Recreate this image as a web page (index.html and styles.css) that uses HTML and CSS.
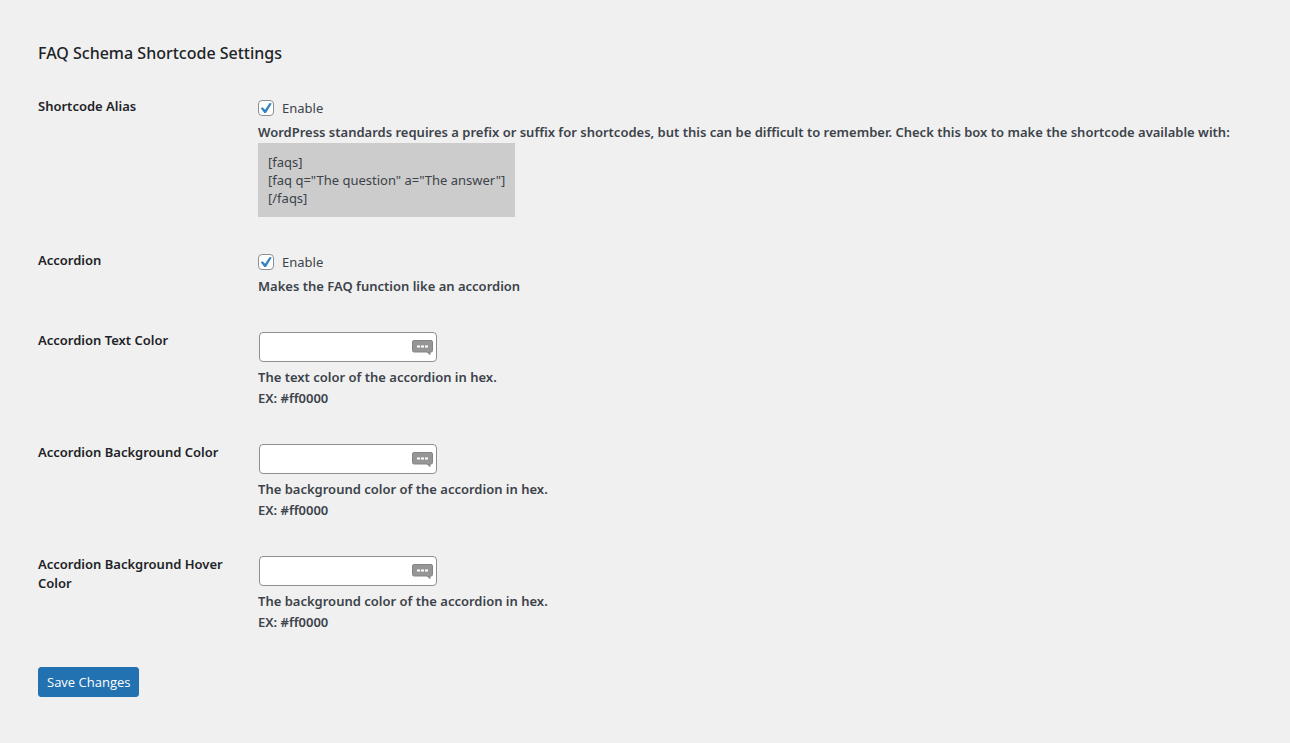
FILE: index.html
```html
<!DOCTYPE html>
<html lang="en">
<head>
    <meta charset="UTF-8">
    <meta name="viewport" content="width=device-width, initial-scale=1.0">
    <title>FAQ Schema Shortcode Settings</title>
    <link rel="stylesheet" href="styles.css">
</head>
<body>
    <form class="settings" method="post">
        <h2>FAQ Schema Shortcode Settings</h2>

        <div class="row">
            <div class="row-title">Shortcode Alias</div>
            <div class="row-field">
                <label class="check"><input type="checkbox" name="alias" checked> Enable</label>
                <p class="description">WordPress standards requires a prefix or suffix for shortcodes, but this can be difficult to remember. Check this box to make the shortcode available with:</p>
                <div class="shortcode">[faqs]<br>[faq q="The question" a="The answer"]<br>[/faqs]</div>
            </div>
        </div>

        <div class="row">
            <div class="row-title">Accordion</div>
            <div class="row-field">
                <label class="check"><input type="checkbox" name="accordion" checked> Enable</label>
                <p class="description">Makes the FAQ function like an accordion</p>
            </div>
        </div>

        <div class="row">
            <label class="row-title" for="text-color">Accordion Text Color</label>
            <div class="row-field">
                <div class="color-field">
                    <input type="text" id="text-color" name="text_color">
                    <svg class="bubble" viewBox="0 0 21 15" aria-hidden="true">
                        <path d="M2 .5h17a1.500 1.500 0 0 1 1.500 1.500v8.500a1.500 1.500 0 0 1-1.500 1.500h-1v2.500l-3-2.500H2a1.500 1.500 0 0 1-1.500-1.500V2A1.500 1.500 0 0 1 2 .5z"/>
                        <path class="dots" d="M5 6.500h11"/>
                    </svg>
                </div>
                <p class="description">The text color of the accordion in hex.<br>EX: #ff0000</p>
            </div>
        </div>

        <div class="row">
            <label class="row-title" for="bg-color">Accordion Background Color</label>
            <div class="row-field">
                <div class="color-field">
                    <input type="text" id="bg-color" name="bg_color">
                    <svg class="bubble" viewBox="0 0 21 15" aria-hidden="true">
                        <path d="M2 .5h17a1.500 1.500 0 0 1 1.500 1.500v8.500a1.500 1.500 0 0 1-1.500 1.500h-1v2.500l-3-2.500H2a1.500 1.500 0 0 1-1.500-1.500V2A1.500 1.500 0 0 1 2 .5z"/>
                        <path class="dots" d="M5 6.500h11"/>
                    </svg>
                </div>
                <p class="description">The background color of the accordion in hex.<br>EX: #ff0000</p>
            </div>
        </div>

        <div class="row">
            <label class="row-title" for="hover-color">Accordion Background Hover Color</label>
            <div class="row-field">
                <div class="color-field">
                    <input type="text" id="hover-color" name="hover_color">
                    <svg class="bubble" viewBox="0 0 21 15" aria-hidden="true">
                        <path d="M2 .5h17a1.500 1.500 0 0 1 1.500 1.500v8.500a1.500 1.500 0 0 1-1.500 1.500h-1v2.500l-3-2.500H2a1.500 1.500 0 0 1-1.500-1.500V2A1.500 1.500 0 0 1 2 .5z"/>
                        <path class="dots" d="M5 6.500h11"/>
                    </svg>
                </div>
                <p class="description">The background color of the accordion in hex.<br>EX: #ff0000</p>
            </div>
        </div>

        <button type="submit">Save Changes</button>
    </form>
</body>
</html>
```

FILE: styles.css
```css
* {
    box-sizing: border-box;
}
body {
    margin: 0;
    background: #f0f0f0;
    color: #3c434a;
    font-family: "Noto Sans", "Open Sans", sans-serif;
    font-size: 13px;
}
.settings {
    padding: 42px 38px;
}
h2 {
    margin: 0 0 14px;
    color: #1d2327;
    font-size: 16px;
    font-weight: 500;
    line-height: 22px;
}
.row {
    display: grid;
    grid-template-columns: 190px 1fr;
    column-gap: 30px;
    padding-bottom: 15px;
}
.row-title {
    padding-top: 19px;
    color: #1d2327;
    font-weight: 600;
    line-height: 19px;
}
.row-field {
    padding-top: 20px;
}
.check {
    display: flex;
    align-items: center;
    gap: 8px;
    height: 20px;
}
.check input {
    appearance: none;
    display: grid;
    place-items: center;
    width: 16px;
    height: 16px;
    margin: 0;
    border: 1px solid #8c8f94;
    border-radius: 4px;
    background: #fff;
}
.check input:checked::before {
    content: "";
    width: 12px;
    height: 12px;
    background: #3582c4;
    clip-path: polygon(6% 52%, 22% 44%, 42% 64%, 80% 8%, 98% 12%, 50% 92%, 36% 92%);
}
.description {
    margin: 4px 0 0;
    font-weight: 600;
    line-height: 21px;
}
.shortcode {
    width: fit-content;
    padding: 10px;
    background: #ccc;
    line-height: 18px;
}
.color-field {
    position: relative;
    width: 178px;
    margin: 0 1px 5px;
}
.color-field + .description {
    margin-top: 0;
}
.color-field input {
    display: block;
    width: 100%;
    height: 30px;
    padding: 0 30px 0 8px;
    border: 1px solid #8c8f94;
    border-radius: 4px;
    background: #fff;
    color: #2c3338;
    font: inherit;
}
.bubble {
    position: absolute;
    top: 8px;
    right: 4px;
    width: 21px;
    height: 15px;
    fill: #969696;
    stroke: #858585;
}
.dots {
    stroke: #fff;
    stroke-width: 2;
    stroke-dasharray: 3 1;
}
button {
    display: block;
    height: 30px;
    margin-top: 19px;
    padding: 0 8px;
    border: 1px solid #2271b1;
    border-radius: 3px;
    background: #2271b1;
    color: #fff;
    font-family: "Open Sans", sans-serif;
    font-size: 13px;
    cursor: pointer;
}
```
